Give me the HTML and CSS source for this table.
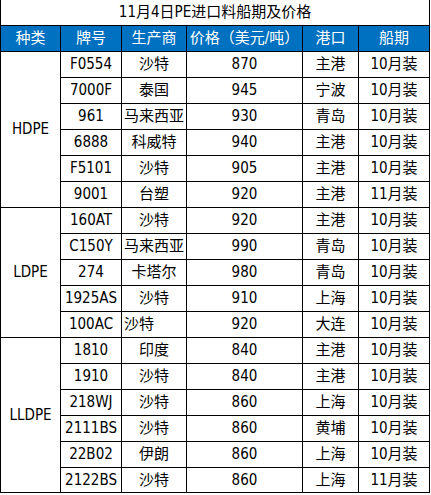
FILE: index.html
```html
<!DOCTYPE html>
<html lang="zh">
<head>
<meta charset="utf-8">
<link rel="stylesheet" href="styles.css">
</head>
<body>
<table class="sheet">
  <colgroup>
    <col class="c1"><col class="c2"><col class="c3"><col class="c4"><col class="c5"><col class="c6">
  </colgroup>
  <tr class="title"><td colspan="6">11月4日PE进口料船期及价格</td></tr>
  <tr class="head"><td>种类</td><td>牌号</td><td>生产商</td><td>价格（美元/吨）</td><td>港口</td><td>船期</td></tr>
  <tr><td rowspan="6">HDPE</td><td>F0554</td><td>沙特</td><td>870</td><td>主港</td><td>10月装</td></tr>
  <tr><td>7000F</td><td>泰国</td><td>945</td><td>宁波</td><td>10月装</td></tr>
  <tr><td>961</td><td>马来西亚</td><td>930</td><td>青岛</td><td>10月装</td></tr>
  <tr><td>6888</td><td>科威特</td><td>940</td><td>主港</td><td>10月装</td></tr>
  <tr><td>F5101</td><td>沙特</td><td>905</td><td>主港</td><td>10月装</td></tr>
  <tr><td>9001</td><td>台塑</td><td>920</td><td>主港</td><td>11月装</td></tr>
  <tr><td rowspan="5">LDPE</td><td>160AT</td><td>沙特</td><td>920</td><td>主港</td><td>10月装</td></tr>
  <tr><td>C150Y</td><td>马来西亚</td><td>990</td><td>青岛</td><td>10月装</td></tr>
  <tr><td>274</td><td>卡塔尔</td><td>980</td><td>青岛</td><td>10月装</td></tr>
  <tr><td>1925AS</td><td>沙特</td><td>910</td><td>上海</td><td>10月装</td></tr>
  <tr><td>100AC</td><td class="left">沙特</td><td>920</td><td>大连</td><td>10月装</td></tr>
  <tr><td rowspan="6">LLDPE</td><td>1810</td><td>印度</td><td>840</td><td>主港</td><td>10月装</td></tr>
  <tr><td>1910</td><td>沙特</td><td>840</td><td>主港</td><td>10月装</td></tr>
  <tr><td>218WJ</td><td>沙特</td><td>860</td><td>上海</td><td>10月装</td></tr>
  <tr><td>2111BS</td><td>沙特</td><td>860</td><td>黄埔</td><td>10月装</td></tr>
  <tr><td>22B02</td><td>伊朗</td><td>860</td><td>上海</td><td>10月装</td></tr>
  <tr class="last"><td>2122BS</td><td>沙特</td><td>860</td><td>上海</td><td>11月装</td></tr>
</table>
</body>
</html>
```
FILE: styles.css
```css
html, body {
  margin: 0;
  padding: 0;
  background: #ffffff;
}
.sheet {
  border-collapse: collapse;
  table-layout: fixed;
  width: 429px;
  font-family: "DejaVu Sans Condensed", "Noto Sans CJK SC", sans-serif;
  font-size: 15px;
  color: #000000;
}
.c1 { width: 60px; }
.c2 { width: 61px; }
.c3 { width: 65px; }
.c4 { width: 116px; }
.c5 { width: 56px; }
.c6 { width: 71px; }
.sheet td {
  border: 1px solid #000000;
  padding: 0;
  height: 25px;
  line-height: 25px;
  text-align: center;
  vertical-align: middle;
  white-space: nowrap;
  overflow: hidden;
}
.sheet .title td {
  border-top: none;
  height: 25px;
  line-height: 25px;
}
.sheet .last td {
  height: 24px;
  line-height: 24px;
}
.sheet .head td {
  background: #0070c0;
  color: #ffffff;
}
.sheet td.left {
  text-align: left;
  padding-left: 2px;
}
```
